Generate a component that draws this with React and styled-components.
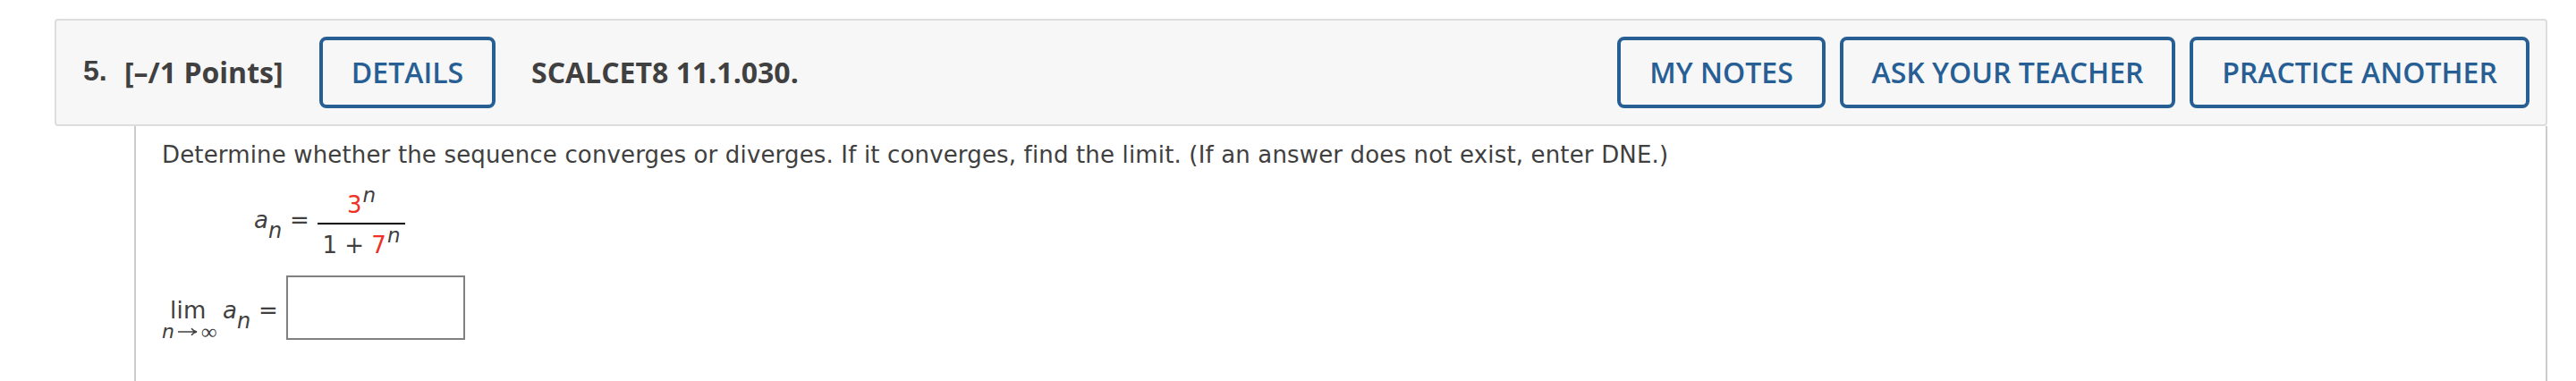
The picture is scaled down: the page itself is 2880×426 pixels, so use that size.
import React from "react";
import styled, { createGlobalStyle } from "styled-components";

export default function App() {
  return (
    <>
      <GlobalStyle />
      <Question>
        <Header>
          <Number>5.</Number>
          <Points>[–/1 Points]</Points>
          <Button $width={197}>DETAILS</Button>
          <Source>SCALCET8 11.1.030.</Source>
          <Actions>
            <Button $width={233}>MY NOTES</Button>
            <Button $width={375}>ASK YOUR TEACHER</Button>
            <Button $width={380}>PRACTICE ANOTHER</Button>
          </Actions>
        </Header>
        <Body>
          <Prompt>
            Determine whether the sequence converges or diverges. If it
            converges, find the limit. (If an answer does not exist, enter
            DNE.)
          </Prompt>
          <Equation>
            <Term>
              <i>a</i>
              <Sub>n</Sub>
            </Term>
            <Equals>=</Equals>
            <Fraction>
              <Numerator>
                <Red>3</Red>
                <Sup>n</Sup>
              </Numerator>
              <Denominator>
                1 + <Red>7</Red>
                <Sup>n</Sup>
              </Denominator>
            </Fraction>
          </Equation>
          <Answer>
            <Limit>
              <span>lim</span>
              <Approach>
                <i>n</i>
                <Arrow />
                <Infinity>∞</Infinity>
              </Approach>
            </Limit>
            <Term>
              <i>a</i>
              <Sub>n</Sub>
            </Term>
            <Equals>=</Equals>
            <Input type="text" aria-label="limit" />
          </Answer>
        </Body>
      </Question>
    </>
  );
}

function Arrow() {
  return (
    <ArrowSvg width="22" height="10" viewBox="0 0 22 10" fill="none">
      <path
        d="M0 5H21M15 1.2C16.5 3.2 18.5 4.4 21 5C18.5 5.6 16.5 6.8 15 8.8"
        stroke="#404040"
        strokeWidth="1.5"
      />
    </ArrowSvg>
  );
}

const GlobalStyle = createGlobalStyle`
  * {
    box-sizing: border-box;
  }
  body {
    margin: 0;
    background: #fff;
    color: #404040;
    overflow: hidden;
  }
`;
const Question = styled.section`
  height: 426px;
  padding: 21px 32px 0 61px;
  display: flex;
  flex-direction: column;
`;
const Header = styled.header`
  height: 120px;
  flex: none;
  display: flex;
  align-items: center;
  padding: 0 18px 0 30px;
  background: #f7f7f7;
  border: 2px solid #ddd;
  border-radius: 4px;
  font: 700 32px/44px "Open Sans", sans-serif;
  white-space: nowrap;
`;
const Number = styled.span`
  width: 46px;
  padding-bottom: 4px;
  font-family: "Liberation Sans", Arial, sans-serif;
`;
const Points = styled.span`
  width: 218px;
`;
const Button = styled.button`
  width: ${(props) => props.$width}px;
  height: 80px;
  flex: none;
  padding: 0 0 1px;
  color: #275f95;
  background: transparent;
  border: 4px solid #275f95;
  border-radius: 8px;
  font: 600 32px/44px "Open Sans", sans-serif;
`;
const Source = styled.span`
  margin-left: 40px;
`;
const Actions = styled.div`
  display: flex;
  gap: 16px;
  margin-left: auto;
`;
const Body = styled.div`
  flex: 1;
  margin-left: 89px;
  padding: 14px 0 0 29px;
  border: solid #ccc;
  border-width: 0 2px;
  font: 26px/36px Verdana, "DejaVu Sans", sans-serif;
`;
const Prompt = styled.p`
  margin: 0;
  white-space: nowrap;
  letter-spacing: 0.155px;
`;
const Equation = styled.div`
  display: flex;
  height: 96px;
  margin-top: 14px;
  padding-left: 103px;
`;
const Term = styled.span`
  width: 40px;
  padding-top: 23px;
  white-space: nowrap;
`;
const Sub = styled.i`
  display: inline-block;
  line-height: 0;
  vertical-align: -11px;
  font-size: 24px;
`;
const Sup = styled(Sub)`
  margin-left: 1px;
  vertical-align: 12px;
  font-size: 23px;
`;
const Equals = styled.span`
  width: 31px;
  padding-top: 23px;
`;
const Fraction = styled.span`
  width: 98px;
  display: flex;
  flex-direction: column;
  text-align: center;
  white-space: nowrap;
`;
const Numerator = styled.span`
  height: 46px;
  padding-top: 6px;
  border-bottom: 2px solid #000;
`;
const Denominator = styled.span`
  padding-top: 5px;
`;
const Red = styled.span`
  color: #ee3124;
`;
const Answer = styled.div`
  display: flex;
  height: 80px;
  margin-top: 5px;
`;
const Limit = styled.span`
  width: 68px;
  padding-top: 23px;
  display: flex;
  flex-direction: column;
  span {
    padding-left: 9px;
    letter-spacing: 0.3px;
  }
`;
const Approach = styled.div`
  display: flex;
  align-items: center;
  height: 22px;
  margin-top: -5px;
  font-size: 22px;
`;
const ArrowSvg = styled.svg`
  flex: none;
  margin-left: 4px;
`;
const Infinity = styled.b`
  margin-left: 4px;
  font: 700 24px/22px "Liberation Serif", serif;
`;
const Input = styled.input`
  width: 200px;
  height: 72px;
  margin: 2px 0 0;
  border: 2px solid #808080;
  background: #fff;
`;
